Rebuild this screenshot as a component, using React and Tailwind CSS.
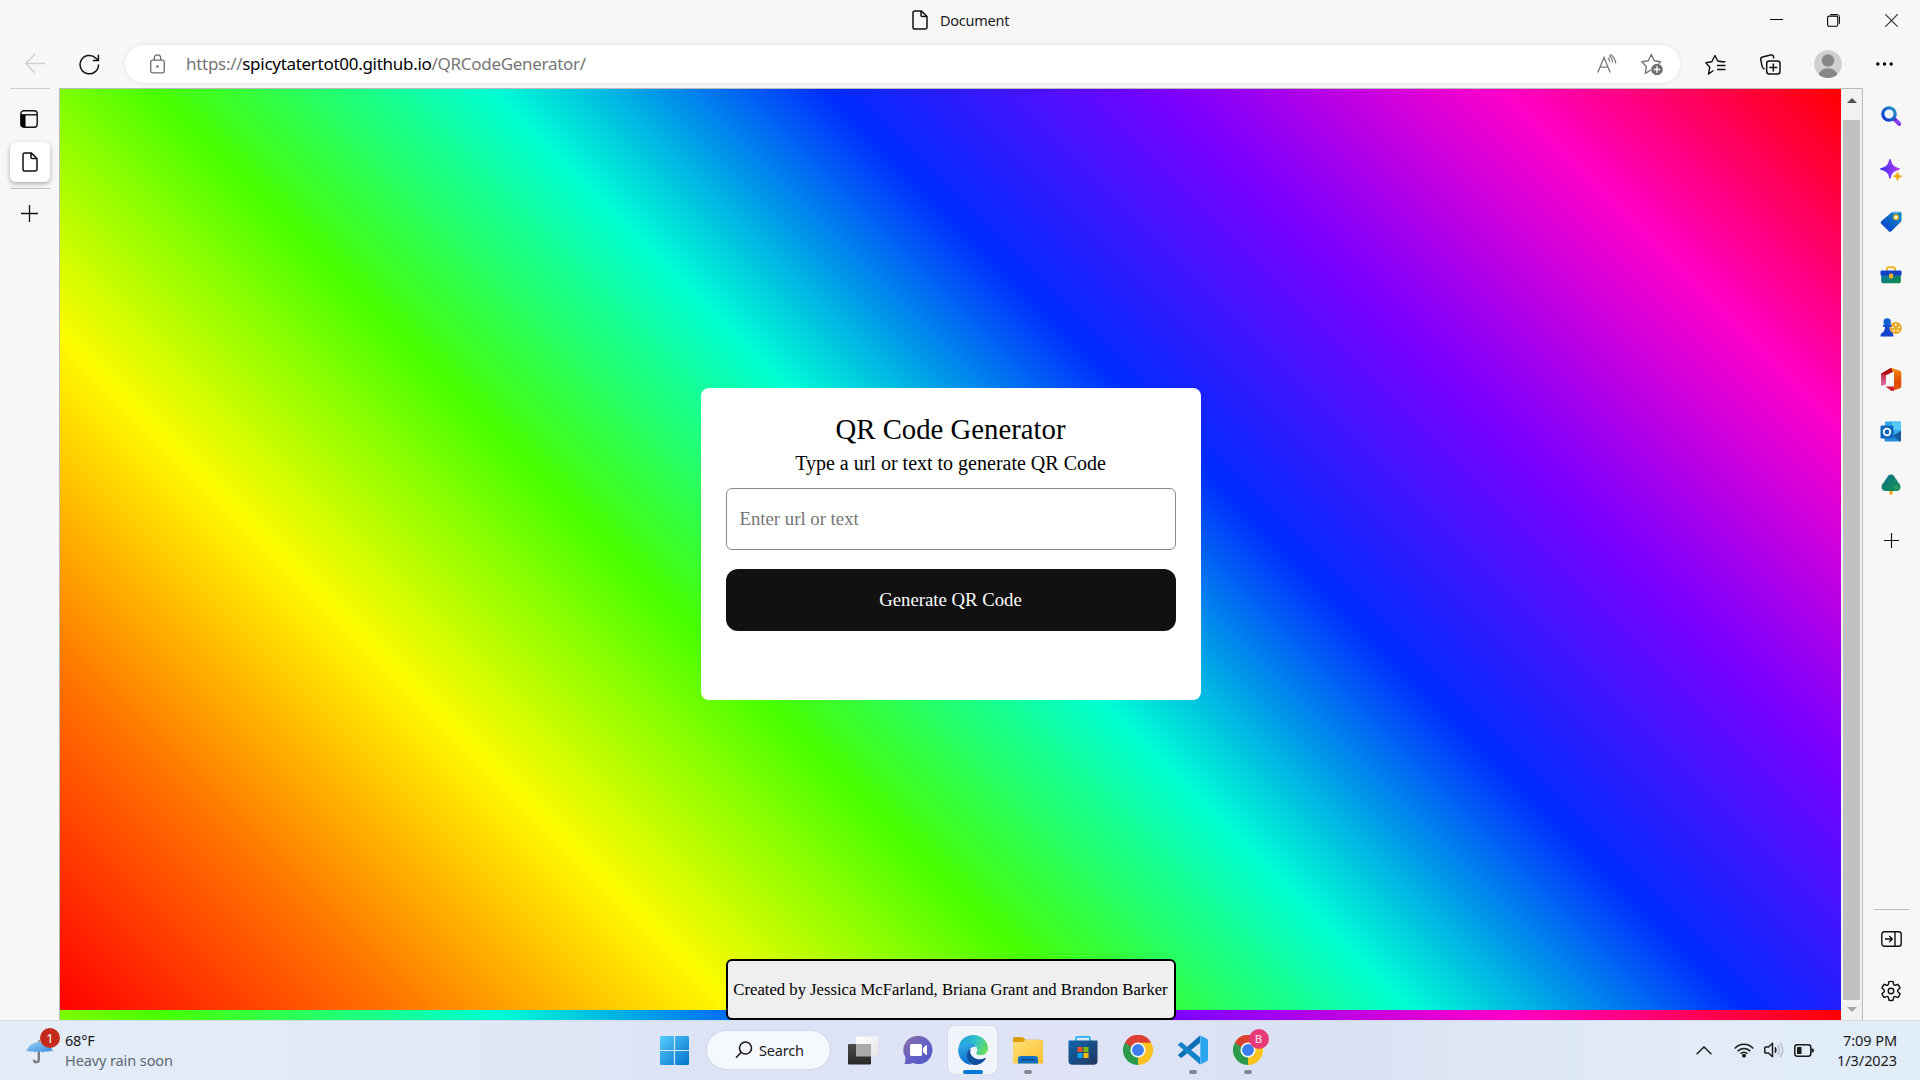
import React from "react";

const UI = "font-['Noto_Sans','Open_Sans',sans-serif]";
const SERIF = "font-['Liberation_Serif',serif]";

function Svg({ w = 24, h = w, vb, className = "", children }) {
  return (
    <svg width={w} height={h} viewBox={vb || `0 0 ${w} ${h}`} fill="none" className={`block shrink-0 ${className}`}>
      {children}
    </svg>
  );
}

const DocIcon = () => (
  <Svg w={16} h={20}>
    <path d="M3 .9h6.2L15 6.5v10.8a1.8 1.8 0 0 1-1.8 1.8H2.8A1.8 1.8 0 0 1 1 17.300V2.700A1.800 1.800 0 0 1 2.800.9zM9 1v4.200c0 .8.5 1.300 1.300 1.300H15" stroke="#111" strokeWidth="1.500" strokeLinejoin="round" />
  </Svg>
);

const Plus = ({ s = 17, c = "#111" }) => (
  <Svg w={s} vb="0 0 17 17">
    <path d="M8.500 0v17M0 8.500h17" stroke={c} strokeWidth="1.300" />
  </Svg>
);

function TitleBar() {
  return (
    <div className="flex h-10 shrink-0 items-center justify-end">
      <div className="flex flex-1 items-center gap-3 pl-[912px]">
        <DocIcon />
        <span className="-mt-px text-[14.5px] leading-5 tracking-[-0.25px] text-[#1b1b1b]">Document</span>
      </div>
      <div className="flex items-center gap-[44px] pr-[22px]">
        <Svg w={13}><path d="M0 5.500h13" stroke="#000" strokeWidth="1" /></Svg>
        <Svg w={13}>
          <rect x=".6" y="2.100" width="10.200" height="10.200" rx="1.500" stroke="#000" strokeWidth="1.100" />
          <path d="M3.200.6h7A2.200 2.200 0 0 1 12.400 2.800v7" stroke="#000" strokeWidth="1" />
        </Svg>
        <Svg w={13} className="ml-px"><path d="M.3.3l12.400 12.400M12.700.3L.3 12.700" stroke="#333" strokeWidth="1.200" /></Svg>
      </div>
    </div>
  );
}

function Toolbar() {
  return (
    <div className="flex h-12 shrink-0 items-start pt-[5px]">
      <div className="flex h-[38px] w-[125px] items-center gap-[34px] pl-[25px]">
        <Svg w={20}><path d="M20 9.500H1M10 0L.8 9.500l9.200 9.500" stroke="#cfcfcf" strokeWidth="1.400" /></Svg>
        <Svg w={21}>
          <path d="M19.500 10.500a9.200 9.200 0 1 1-2.800-6.500l2.300 2.200" stroke="#111" strokeWidth="1.500" />
          <path d="M19.400.8v5.700h-5.600" stroke="#111" strokeWidth="1.500" />
        </Svg>
      </div>
      <div className="flex h-[38px] w-[1555px] items-center rounded-full bg-white pl-[25px] pr-[17px] shadow-[0_0_5px_rgba(0,0,0,0.09)]">
        <Svg w={15} h={20}>
          <rect x=".7" y="6.200" width="13.600" height="12.600" rx="2" stroke="#6b6b6b" strokeWidth="1.300" />
          <path d="M4.300 6V4a3.200 3.200 0 0 1 6.400 0v2" stroke="#6b6b6b" strokeWidth="1.300" />
          <circle cx="7.500" cy="12.500" r="1.300" fill="#6b6b6b" />
        </Svg>
        <span className="ml-[21px] flex-1 whitespace-pre text-[17px] leading-6 tracking-[-0.29px] text-[#767676]">
          https://<span className="text-black">spicytatertot00.github.io</span>/QRCodeGenerator/
        </span>
        <Svg w={20}>
          <path d="M.8 18.500L7 3.500l6.200 15M3 13.200h8" stroke="#767676" strokeWidth="1.300" />
          <path d="M10.800 3.800c1.300 1 2 2.600 2 4.400M12 1.500c2.300 1.700 3.500 4.200 3.500 7M13.200.2c3.400 2.200 5.300 5.500 5.500 9.300" stroke="#767676" strokeWidth="1.200" />
        </Svg>
        <Svg w={22} className="ml-6">
          <path d="M10 17L4.300 20.300l1-6.800L.8 8.800l6.500-1L10.300 1.500l3 6.300 6.300 1-2 2" stroke="#767676" strokeWidth="1.400" strokeLinejoin="round" />
          <circle cx="16" cy="16.500" r="5.800" fill="#6f6f6f" />
          <path d="M16 13.300v6.400M12.800 16.500h6.400" stroke="#fff" strokeWidth="1.400" />
        </Svg>
      </div>
      <div className="flex h-[38px] items-center pl-[25px]">
        <Svg w={21}>
          <path d="M8.500 16.500L3.500 20l1.300-6.800L.8 8.700l6-1L10 1.500l2.700 5.500 6.500 1M12 11.500h8.500M12 15.500h8.500" stroke="#111" strokeWidth="1.400" strokeLinejoin="round" />
          <path d="M14 7.600h6.500" stroke="#111" strokeWidth="1.200" />
        </Svg>
        <Svg w={21} className="ml-[34px]">
          <rect x="6.700" y="7" width="13.300" height="13" rx="2.500" stroke="#111" strokeWidth="1.500" />
          <path d="M13.300 9.500v8M9.300 13.500h8" stroke="#111" strokeWidth="1.500" />
          <path d="M4.500 15.200c-1.500-.6-2.200-1.600-2.500-3L.8 5.700c-.3-1.400.3-2.300 1.700-2.700L10.500 1c1.600-.4 2.700.2 3 1.800l.3 1.500" stroke="#111" strokeWidth="1.500" />
        </Svg>
        <Svg w={28} className="ml-[33px]">
          <defs><clipPath id="avatar"><circle cx="14" cy="14" r="14" /></clipPath></defs>
          <g clipPath="url(#avatar)">
            <circle cx="14" cy="14" r="14" fill="#d2d0ce" />
            <circle cx="14" cy="10.500" r="6.200" fill="#8a8886" />
            <ellipse cx="14" cy="26.500" rx="10" ry="8.300" fill="#8a8886" />
          </g>
        </Svg>
        <Svg w={17} h={4} className="ml-[34px]">
          <circle cx="1.800" cy="2" r="1.700" fill="#000" /><circle cx="8.500" cy="2" r="1.700" fill="#000" /><circle cx="15.200" cy="2" r="1.700" fill="#000" />
        </Svg>
      </div>
    </div>
  );
}

function TabRail() {
  return (
    <div className="flex w-[59px] shrink-0 flex-col items-center">
      <div className="h-px w-10 bg-[#cdcdcd]" />
      <Svg w={18} className="-ml-px mt-[21px]">
        <rect x=".8" y=".8" width="16.400" height="16.400" rx="3" stroke="#111" strokeWidth="1.400" />
        <path d="M1 4.800h16" stroke="#111" strokeWidth="1.400" />
        <path d="M1 5h4.500v12H3.500A2.500 2.500 0 0 1 1 14.500z" fill="#000" />
      </Svg>
      <div className="mt-[14px] flex h-10 w-10 items-center justify-center rounded-md bg-white shadow-[0_2px_5px_rgba(0,0,0,0.3)]">
        <DocIcon />
      </div>
      <div className="mt-[6px] h-px w-10 bg-[#c4c4c4]" />
      <div className="mt-4"><Plus /></div>
    </div>
  );
}

function QrPage() {
  return (
    <div className={`flex flex-1 flex-col items-center bg-[linear-gradient(45deg,#ff0000,#ff7300,#fffb00,#48ff00,#00ffd5,#002bff,#7a00ff,#ff00c8,#ff0000)] bg-[length:100%_921px] bg-repeat-y pt-[299px] ${SERIF}`}>
      <div className="flex h-[312px] w-[500px] flex-col rounded-lg bg-white px-[25px] pt-[21px] text-center text-black">
        <h1 className="text-[28.75px] leading-10">QR Code Generator</h1>
        <p className="text-[20px] leading-7">Type a url or text to generate QR Code</p>
        <input
          placeholder="Enter url or text"
          className="mt-[11px] h-[62px] w-full rounded-md border border-[#8a8a8a] bg-white px-[13px] text-[18.75px] placeholder:text-[#757575]"
        />
        <button className="mt-[19px] h-[62px] w-full rounded-[12px] bg-[#111] text-[18.75px] text-white">Generate QR Code</button>
      </div>
      <div className="mt-[259px] flex h-[61px] w-[450px] items-center justify-center whitespace-nowrap rounded-md border-2 border-black bg-[#efefef] text-[16.67px] text-black">
        Created by Jessica McFarland, Briana Grant and Brandon Barker
      </div>
    </div>
  );
}

function Scrollbar() {
  return (
    <div className="flex w-[21px] shrink-0 flex-col items-center bg-[#f1f1f1]">
      <div className="flex h-[31px] items-start pt-[9px]"><Svg w={10} h={5}><path d="M0 5L5 0l5 5z" fill="#505050" /></Svg></div>
      <div className="h-[880px] w-[17px] bg-[#c1c1c1]" />
      <div className="pt-[7px]"><Svg w={10} h={5}><path d="M0 0l5 5 5-5z" fill="#a3a3a3" /></Svg></div>
    </div>
  );
}

function SideRail() {
  return (
    <div className="flex w-[57px] shrink-0 flex-col items-center pr-px pt-[18px]">
      <Svg w={20}>
        <defs>
          <linearGradient id="lens" x1="0" y1="1" x2="1" y2="0"><stop stopColor="#0a2fd0" /><stop offset="1" stopColor="#2a9bc9" /></linearGradient>
          <linearGradient id="spark" x1="0" y1="0" x2="1" y2="0"><stop stopColor="#3b2df0" /><stop offset="1" stopColor="#b83af5" /></linearGradient>
          <linearGradient id="tag" x1="0" y1="1" x2="1" y2="0"><stop stopColor="#0a35d6" /><stop offset="1" stopColor="#0c91b6" /></linearGradient>
          <linearGradient id="box" x1="0" y1="0" x2="1" y2="1"><stop stopColor="#0b77b8" /><stop offset="1" stopColor="#0c8a3d" /></linearGradient>
          <linearGradient id="tree" x1="0" y1="0" x2="1" y2="1"><stop stopColor="#0c7390" /><stop offset="1" stopColor="#149048" /></linearGradient>
          <linearGradient id="officeR" x1="0" y1="0" x2="0" y2="1"><stop stopColor="#f5900f" /><stop offset=".6" stopColor="#e04a08" /><stop offset="1" stopColor="#ec5b05" /></linearGradient>
          <linearGradient id="officeL" x1="0" y1="0" x2="0" y2="1"><stop stopColor="#a81010" /><stop offset="1" stopColor="#e773b8" /></linearGradient>
        </defs>
        <path d="M13.300 13l5 5" stroke="#8c3cf0" strokeWidth="4" strokeLinecap="round" />
        <path d="M12.300 12l2 2.200" stroke="#5a24a0" strokeWidth="3" />
        <circle cx="8" cy="8" r="6.200" stroke="url(#lens)" strokeWidth="3.200" fill="#eef4fc" />
      </Svg>
      <Svg w={22} className="mt-[33px]">
        <path d="M10 .5c1.200 5.500 3 8 9.300 9.300-6.300 1.700-8.100 4.200-9.300 9.300-1.200-5.100-3-7.600-9.300-9.300C7 8.500 8.800 6 10 .5z" fill="url(#spark)" stroke="url(#spark)" strokeWidth="1.300" strokeLinejoin="round" />
        <path d="M17.500 12.800c.6 2.700 1.500 3.700 4.400 4.400-2.900.7-3.800 1.700-4.400 4.500-.6-2.800-1.500-3.800-4.400-4.500 2.900-.7 3.800-1.700 4.400-4.400z" fill="#f0a90c" stroke="#f0a90c" strokeWidth=".6" />
      </Svg>
      <Svg w={22} className="mt-[30px]">
        <path d="M11.500 1.500Q12.200.8 13.500.8H20q1.500 0 1.500 1.500V9q0 1.200-.8 2L11.300 20.300q-1.300 1.200-2.500 0L1.200 12.800q-1.200-1.200 0-2.500z" fill="url(#tag)" />
        <path d="M11 2.500L13.500 1H19l1.500 1z" fill="#74b8e8" />
        <circle cx="16" cy="6.200" r="2.200" fill="#fff" stroke="#f2b21a" strokeWidth="1.300" />
      </Svg>
      <Svg w={22} h={18} className="mt-[33px]">
        <path d="M7 5V3q0-1.800 1.800-1.800h4.400Q15 1.200 15 3v2" stroke="#efb32b" strokeWidth="1.900" />
        <path d="M1.200 7h19.600v8.500q0 1.700-1.700 1.700H2.900q-1.700 0-1.700-1.700z" fill="url(#box)" />
        <path d="M.5 5.800q0-1.300 1.300-1.300h18.400q1.300 0 1.300 1.300v2.400q0 1.200-1.200 1.200H1.700Q.5 9.400.5 8.200z" fill="#1341c8" />
        <rect x="9" y="7.500" width="4.200" height="5" rx="1.600" fill="#f5ad1b" />
      </Svg>
      <Svg w={22} h={19} className="mt-[34px]">
        <circle cx="15.800" cy="10" r="6" fill="#eba51d" />
        {[[15.800, 6.800], [12.700, 9.300], [18.900, 9.300], [14, 12.600], [17.700, 12.600]].map(([x, y]) => <circle key={x} cx={x} cy={y} r="1.100" fill="#fff4d8" />)}
        <circle cx="7.200" cy="4" r="3.700" fill="#1260cf" />
        <rect x="2.800" y="6.500" width="8.800" height="2.500" rx="1.200" fill="#1556d2" />
        <path d="M5 8.500h4.400c0 3 .6 5 3 6.500.8.700 1 1.700 1 3.500H.5c0-2 .3-2.800 1.500-3.500C4.300 13.500 5 11.500 5 8.500z" fill="#1242c9" />
      </Svg>
      <Svg w={22} h={25} className="mt-[30px]">
        <path d="M1 6.800L11 .8v4.700L6 8v9.500L1 19z" fill="url(#officeL)" />
        <path d="M1 6.800L11.500.8 13 5 6 8z" fill="#b01116" />
        <path d="M11 .8l8.500 2.700q1.800.6 1.800 2.300v13.500q0 1.700-1.800 2.300L11.500 24 14 19V5.500z" fill="url(#officeR)" />
        <path d="M5.500 19.500H14v4l-2.500.5z" fill="#cf1f31" />
      </Svg>
      <Svg w={22} h={21} className="mt-[29px]">
        <rect x="5" y=".5" width="16" height="18" rx="1" fill="#31a9ea" />
        <path d="M12 .5h8q1 0 1 1V9h-9z" fill="#58c9f7" />
        <path d="M4.500 10l9 5 7.500-5v9.500q0 1-1 1h-14q-1.500 0-1.500-1z" fill="#238cdb" />
        <path d="M21 10v9.500q0 1-1 1L13 14.800z" fill="#155c9e" />
        <rect x=".5" y="4.500" width="13" height="13" rx="1.200" fill="#0f67bd" />
        <circle cx="7" cy="11" r="3.300" stroke="#fff" strokeWidth="1.800" />
      </Svg>
      <Svg w={20} h={21} className="mt-8">
        <path d="M8.500 15h3v4.500q0 1.200-1.500 1.200t-1.500-1.200z" fill="#f2a31a" />
        <path d="M10 .5c2.500 0 3.200 1.700 4 3.300.8 1.500 2.500 2 2.500 4 1.500 1 2.800 2.700 3 5 .2 2.500-1.500 4.200-4 4.200h-11c-2.500 0-4.200-1.700-4-4.200.2-2.300 1.500-4 3-5 0-2 1.700-2.500 2.500-4C6.800 2.200 7.500.5 10 .5z" fill="url(#tree)" />
        <circle cx="15" cy="13.500" r="2.300" fill="#2b9b67" /><circle cx="13.500" cy="7" r="1.800" fill="#1e8b72" />
      </Svg>
      <div className="mt-[38px]"><Plus s={15} /></div>
      <div className="mt-auto h-px w-[35px] bg-[#bdbdbd]" />
      <Svg w={21} h={16} className="mt-[21px]">
        <rect x=".8" y=".8" width="19.400" height="14.400" rx="2.500" stroke="#111" strokeWidth="1.400" />
        <path d="M14 1v14M4 8h7M8.300 5l3 3-3 3" stroke="#111" strokeWidth="1.400" />
      </Svg>
      <Svg w={22} className="mb-[18px] mt-[33px]" vb="0 0 24 24">
        <path d="M12 1.500c.8 0 1.500.1 2.200.3l.6 2.700c.2.900 1.200 1.500 2.100 1.200l2.700-.9c1 1.100 1.800 2.400 2.200 3.900l-2.100 1.900c-.7.700-.7 1.800 0 2.500l2.100 2c-.4 1.500-1.200 2.800-2.200 3.900l-2.700-.9c-.9-.3-1.900.3-2.100 1.200l-.6 2.800a9.500 9.500 0 0 1-4.400 0l-.6-2.800c-.2-.9-1.200-1.500-2.100-1.200l-2.700.9A10 10 0 0 1 2.200 15.100l2.100-2c.7-.7.7-1.800 0-2.500L2.200 8.700c.4-1.500 1.200-2.800 2.200-3.900l2.700.9c.9.3 1.900-.3 2.100-1.200l.6-2.700c.7-.2 1.400-.3 2.200-.3z" stroke="#111" strokeWidth="1.600" />
        <circle cx="12" cy="12" r="3" stroke="#111" strokeWidth="1.600" />
      </Svg>
    </div>
  );
}

const Chrome = () => (
  <Svg w={30} vb="0 0 48 48">
    <path d="M24 24L3.200 12A24 24 0 0 1 44.800 12z" fill="#dd4032" />
    <path d="M24 24V12h20.800A24 24 0 0 1 24 48z" fill="#fcc31e" />
    <path d="M3.200 12L13.600 30 24 34.500l6.500-1L24 48A24 24 0 0 1 3.200 12z" fill="#2b9a4b" />
    <path d="M24 48l10.400-18L24 24z" fill="#fcc31e" />
    <path d="M3.200 12A24 24 0 0 1 44.800 12H24L13.600 18l-1 9z" fill="#dd4032" />
    <path d="M3.200 12l10.400 18 6-2-5-8z" fill="#2b9a4b" />
    <circle cx="24" cy="24" r="12" fill="#fff" />
    <circle cx="24" cy="24" r="9.500" fill="#3b7ded" />
  </Svg>
);

function TaskCell({ children, running, active }) {
  return (
    <div className="relative flex h-12 w-[55px] items-center justify-center">
      {active && <div className="absolute inset-x-[3px] inset-y-0 rounded-md bg-white/60 shadow-[0_0_1px_rgba(0,0,0,0.3)]" />}
      <div className="relative">{children}</div>
      {running && <div className="absolute bottom-0 h-1 w-2 rounded-full bg-[#858891]" />}
      {active && <div className="absolute bottom-0 h-1 w-5 rounded-full bg-[#0078d4]" />}
    </div>
  );
}

function Taskbar() {
  return (
    <div className="flex h-[60px] shrink-0 items-center border-t border-[#d3dbe9] bg-[linear-gradient(90deg,#e2edf8_0%,#e1eaf7_22%,#dbe3f5_36%,#dfe3f5_55%,#d9e2f3_70%,#e0ebf7_85%,#e1edf8_100%)] pb-px">
      <div className="flex w-[647px] items-center pl-[26px]">
        <div className="relative mt-1 h-7 w-[39px]">
          <Svg w={28} h={26}>
            <defs><linearGradient id="umb" x1="0" y1="0" x2="1" y2="1"><stop stopColor="#9ed2f7" /><stop offset="1" stopColor="#2f86dc" /></linearGradient></defs>
            <path d="M12.800 10v11.500q0 2.700-2.500 2.700-2.300 0-2.300-2.500" stroke="#77767b" strokeWidth="2.300" />
            <path d="M13 2v4" stroke="#666" strokeWidth="1.200" />
            <path d="M.5 13.500C2 7.500 7 4 13 4s12.500 4 14 9.500q-3-1.500-5 .5-2.300-1.500-4.700.5-2-2-4.300-.3-2-1.700-4.300.2Q6.500 12.500 4.500 13.800 2.500 12.500.5 13.500z" fill="url(#umb)" />
          </Svg>
          <div className="absolute -top-[10px] left-[14px] flex h-5 w-5 items-center justify-center rounded-full bg-[#c42b1c] text-[13px] leading-none text-white">1</div>
        </div>
        <div className="-mt-px flex flex-col text-[14.500px] leading-5">
          <span className="tracking-[-0.2px] text-[#1a1a1a]">68°F</span>
          <span className="tracking-[-0.1px] text-[#5f6670]">Heavy rain soon</span>
        </div>
      </div>
      <div className="flex items-center">
        <TaskCell>
          <Svg w={29}>
            <defs><linearGradient id="win" x1="0" y1="0" x2="1" y2="1"><stop stopColor="#52cdf9" /><stop offset="1" stopColor="#0572cf" /></linearGradient></defs>
            <path d="M1.500 0H13.900V13.900H0V1.500Q0 0 1.500 0zM15.100 0H27.500Q29 0 29 1.500V13.900H15.100zM0 15.100H13.900V29H1.500Q0 29 0 27.500zM15.100 15.100H29V27.500Q29 29 27.500 29H15.100z" fill="url(#win)" />
          </Svg>
        </TaskCell>
        <div className="ml-[5px] mr-[5px] flex h-[38px] w-[123px] items-center rounded-full bg-[#f5f8fd] pl-[28px] shadow-[0_0_2px_rgba(0,0,0,0.15)]">
          <Svg w={18}><circle cx="10.500" cy="7" r="6" stroke="#1b1b1b" strokeWidth="1.600" /><path d="M6.200 11.300L1 16.800" stroke="#1b1b1b" strokeWidth="1.600" /></Svg>
          <span className="-mt-px ml-[6px] text-[14.5px] leading-5 tracking-[-0.2px] text-[#1b1b1b]">Search</span>
        </div>
        <TaskCell>
          <Svg w={30} h={29}>
            <defs>
              <linearGradient id="tv1" x1="0" y1="0" x2="0" y2="1"><stop stopColor="#4b4b49" /><stop offset="1" stopColor="#282826" /></linearGradient>
              <linearGradient id="tv2" x1="0" y1="0" x2="1" y2="1"><stop stopColor="#fff" /><stop offset="1" stopColor="#e4e4e6" /></linearGradient>
            </defs>
            <rect x="8" y=".500" width="22" height="20" rx="1" fill="url(#tv2)" />
            <rect x="0" y="8" width="23" height="20.500" rx="1" fill="url(#tv1)" />
            <path d="M8 8h15v12.500H8z" fill="#aaa" />
          </Svg>
        </TaskCell>
        <TaskCell>
          <Svg w={30}>
            <defs><linearGradient id="chat" x1="0" y1="0" x2="1" y2="1"><stop stopColor="#8f6ba3" /><stop offset=".5" stopColor="#6663c4" /><stop offset="1" stopColor="#4b55c8" /></linearGradient></defs>
            <path d="M15.500 1A14 14 0 1 1 10 27.900Q6 29.500 1.500 29q1.200-2.500.8-7A14 14 0 0 1 15.500 1z" fill="url(#chat)" />
            <rect x="7" y="9" width="12" height="12" rx="1.500" fill="#fff" />
            <path d="M20 13l3-2.800q1-.5 1 .8v8q0 1.300-1 .8L20 17z" fill="#fff" />
          </Svg>
        </TaskCell>
        <TaskCell active>
          <Svg w={30}>
            <defs>
              <linearGradient id="e1" x1="0" y1=".3" x2="1" y2=".6"><stop stopColor="#1f9ddb" /><stop offset=".55" stopColor="#33c4c8" /><stop offset="1" stopColor="#66e052" /></linearGradient>
              <linearGradient id="e2" x1="0" y1="0" x2=".3" y2="1"><stop stopColor="#35b3ea" /><stop offset="1" stopColor="#0a70d0" /></linearGradient>
            </defs>
            <path d="M.5 13C1.500 5 8 0 15 0c8.500 0 15 6 15 13.300 0 4.200-3.300 7-7.300 7-3 0-4.700-1-4.700-2 0-.8 1.200-1.300 1.200-3.300 0-4-3.700-7-8.700-7C6 8 2.500 10 .5 13z" fill="url(#e1)" />
            <path d="M18 11.500C16.500 9 13.500 7.500 10 7.500 4.500 7.500.3 11 .1 15c0 8 6 14.500 13.500 15C11 27 9 24 9 20.500 9 15.500 12.500 11.500 18 11.500z" fill="url(#e2)" />
            <path d="M12.500 13.500C10.500 14.500 8.800 17 8.800 20.500c0 4.800 3.200 9.500 8 9.500 4.700 0 8.700-2.800 10.900-6.300.3-.5-.1-.8-.6-.6-6.100 2.800-14.100.7-14.600-6.600z" fill="#10509e" />
            <path d="M12.300 16.800c0-2.500 2-4.800 4.200-4.800 1.800 0 2.800 1.200 2.800 3 0 2-1.200 2.500-1.200 3.400 0 1.600 3.500 3 8.400 1.500-1.500 2.300-4.500 2.900-7 2.900-4 0-7.200-2.800-7.200-6z" fill="#eef4fc" />
          </Svg>
        </TaskCell>
        <TaskCell running>
          <Svg w={30}>
            <defs><linearGradient id="fold" x1="0" y1="0" x2="1" y2="1"><stop stopColor="#ffe07a" /><stop offset="1" stopColor="#fdc02d" /></linearGradient></defs>
            <path d="M0 3.500Q0 2 1.500 2h7.300q1 0 2 1l1.700 1.700H28q2 0 2 2V12H0z" fill="#dd9d05" />
            <path d="M0 7h9q1 0 1.800-.7l1.400-1.300H28.500Q30 5 30 6.500V28.500H1.500Q0 28.500 0 27z" fill="url(#fold)" />
            <path d="M5 28.500V24q0-3 3-3h14q3 0 3 3v4.500z" fill="#1070c4" />
            <path d="M9 24.700h12.500" stroke="#0b4a8f" strokeWidth="1.500" strokeLinecap="round" />
          </Svg>
        </TaskCell>
        <TaskCell>
          <Svg w={30}>
            <defs><linearGradient id="store" x1="0" y1="0" x2="1" y2="1"><stop stopColor="#0d65ae" /><stop offset="1" stopColor="#25355c" /></linearGradient></defs>
            <path d="M8 7V3.300Q8 1.800 9.500 1.800h11Q22 1.800 22 3.300V7" stroke="#24b6ef" strokeWidth="1.800" />
            <path d="M.5 5.500h29V26q0 3.800-3.800 3.800H4.300Q.5 29.800.5 26z" fill="url(#store)" />
            <rect x="9.500" y="12" width="5" height="5" fill="#f25022" /><rect x="15.500" y="12" width="5" height="5" fill="#7fba00" />
            <rect x="9.500" y="18" width="5" height="5" fill="#00a4ef" /><rect x="15.500" y="18" width="5" height="5" fill="#ffb900" />
          </Svg>
        </TaskCell>
        <TaskCell><Chrome /></TaskCell>
        <TaskCell running>
          <Svg w={30}>
            <path d="M22 .5v7.200L4 22.500 2.800 22.800.4 20.800q-.6-.7 0-1.300z" fill="#0b6fb3" />
            <path d="M22 29.500v-7.200L4 7.500 2.800 7.200.4 9.200q-.6.7 0 1.300z" fill="#1583c9" />
            <path d="M21.500.3L28.500 3.500Q30 4.200 30 5.800V24.200q0 1.600-1.500 2.300L21.500 29.800Q22.300 29 22.300 28V2Q22.300 1 21.500.3z" fill="#2aa5ee" />
          </Svg>
        </TaskCell>
        <TaskCell running>
          <Chrome />
          <div className="absolute -top-[6px] left-4 flex h-5 w-5 items-center justify-center rounded-full bg-[#e63b76] text-[11.500px] font-medium leading-none text-[#fbd3e0]">B</div>
        </TaskCell>
      </div>
      <div className="ml-auto flex items-center pr-[23px]">
        <Svg w={16} h={9}><path d="M.6 8.300L8 1l7.400 7.300" stroke="#1b1b1b" strokeWidth="1.500" /></Svg>
        <Svg w={20} h={15} className="ml-[22px]">
          <circle cx="10" cy="12.700" r="1.900" fill="#111" />
          <path d="M.8 5.500c5-5.600 13.400-5.600 18.400 0M3.700 8.300c3.500-3.900 9.100-3.900 12.600 0M6.500 10.800c2-2.200 5-2.200 7 0" stroke="#1b1b1b" strokeWidth="1.500" />
        </Svg>
        <Svg w={21} h={16} className="ml-[10px]">
          <path d="M.8 5.800Q.8 5 1.600 5H4.500L8.500 1.300v13.400L4.500 11H1.600q-.8 0-.8-.8z" stroke="#1b1b1b" strokeWidth="1.500" strokeLinejoin="round" />
          <path d="M11 5.300q1.700 2.700 0 5.400" stroke="#1b1b1b" strokeWidth="1.500" />
          <path d="M13.600 3q3.300 5 0 10M16.300.8q4.800 7.200 0 14.400" stroke="#b5bfca" strokeWidth="1.500" />
        </Svg>
        <Svg w={20} h={13} className="ml-[9px]">
          <rect x=".8" y=".8" width="16" height="11.400" rx="2.500" stroke="#1b1b1b" strokeWidth="1.500" />
          <rect x="3" y="3" width="4.500" height="7" rx=".5" fill="#1b1b1b" />
          <path d="M17.500 4.300q2.500 0 2.500 2.200t-2.500 2.200z" fill="#1b1b1b" />
        </Svg>
        <div className="-mt-px flex w-[83px] flex-col text-right text-[14.500px] leading-5 tracking-[-0.08px] text-[#1a1a1a]">
          <span>7:09 PM</span>
          <span>1/3/2023</span>
        </div>
      </div>
    </div>
  );
}

export default function App() {
  return (
    <div className={`flex h-[1080px] w-[1920px] flex-col overflow-hidden bg-[#f7f7f7] ${UI}`}>
      <TitleBar />
      <Toolbar />
      <div className="flex min-h-0 flex-1">
        <TabRail />
        <div className="flex flex-1 border-l border-r border-t border-[#bababa]">
          <QrPage />
          <Scrollbar />
        </div>
        <SideRail />
      </div>
      <Taskbar />
    </div>
  );
}
